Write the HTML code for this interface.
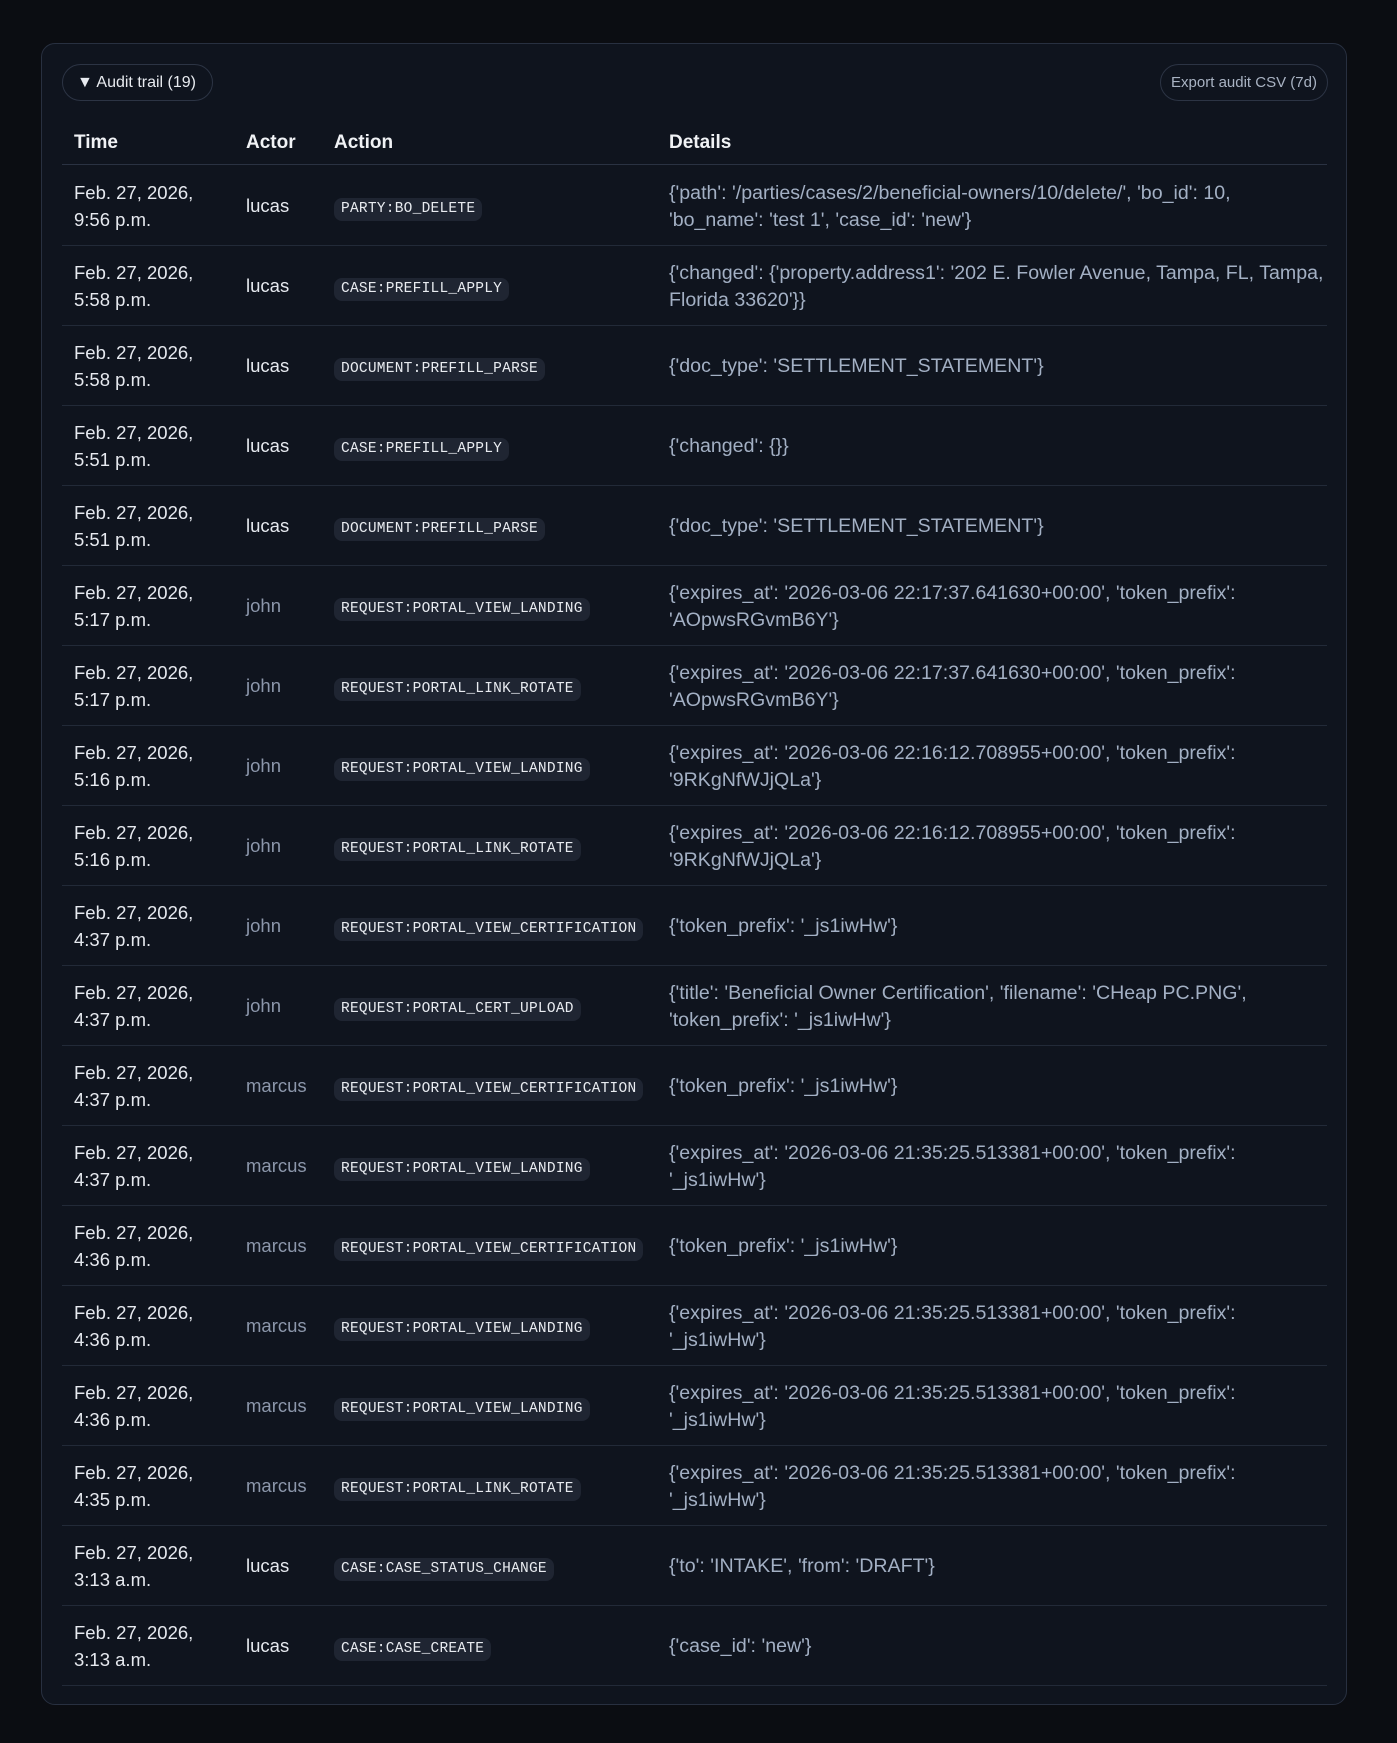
<!DOCTYPE html>
<html><head><meta charset="utf-8"><style>
*{box-sizing:border-box;margin:0;padding:0}
body{width:1397px;height:1743px;background:#0b0d12;font-family:"Liberation Sans",sans-serif;overflow:hidden;position:relative}
.card{position:absolute;left:41px;top:43px;width:1306px;height:1662px;background:#0f141e;border:1px solid #283040;border-radius:14px}
.sum{position:absolute;left:20px;top:20px;width:151px;height:37px;border:1px solid #2c3444;border-radius:19px;color:#e8ebf0;font-size:16px;line-height:35px;padding-left:14px}
.exp{position:absolute;left:1118px;top:20px;width:168px;height:37px;border:1px solid #2c3444;border-radius:19px;color:#a9b3c3;font-size:15px;line-height:35px;text-align:center}
.hdr{position:absolute;top:84px;left:20px;width:1265px;height:37px;border-bottom:1px solid #2a3242;color:#f0f2f5;font-weight:bold;font-size:19px}
.hdr span{position:absolute;top:4px}
.row{position:absolute;left:20px;width:1265px;height:80px;border-bottom:1px solid #222a38}
.t{position:absolute;left:12px;top:13px;color:#e6e9ef;font-size:18.5px;line-height:27px;white-space:nowrap}
.a{position:absolute;left:184px;top:0;line-height:80px;font-size:18.5px;color:#e6e9ef}
.a.g{color:#8c97ab}
.b{position:absolute;left:272px;top:32px;height:23px;line-height:23px;padding:0 7px;background:#1f2532;border-radius:8px;color:#e8ebf0;font-family:"Liberation Mono",monospace;font-size:14.5px;letter-spacing:.25px}
.d{position:absolute;left:607px;top:14px;color:#a3b0c4;font-size:19.6px;line-height:27px;white-space:nowrap}
.d.one{top:27px}
</style></head><body>
<div class="card">
<div class="sum">▼ Audit trail (19)</div>
<div class="exp">Export audit CSV (7d)</div>
<div class="hdr"><span style="left:12px">Time</span><span style="left:184px">Actor</span><span style="left:272px">Action</span><span style="left:607px">Details</span></div>
<div class="row" style="top:122px"><div class="t">Feb. 27, 2026,<br>9:56 p.m.</div><div class="a">lucas</div><div class="b">PARTY:BO_DELETE</div><div class="d">{'path': '/parties/cases/2/beneficial-owners/10/delete/', 'bo_id': 10,<br>'bo_name': 'test 1', 'case_id': 'new'}</div></div>
<div class="row" style="top:202px"><div class="t">Feb. 27, 2026,<br>5:58 p.m.</div><div class="a">lucas</div><div class="b">CASE:PREFILL_APPLY</div><div class="d">{'changed': {'property.address1': '202 E. Fowler Avenue, Tampa, FL, Tampa,<br>Florida 33620'}}</div></div>
<div class="row" style="top:282px"><div class="t">Feb. 27, 2026,<br>5:58 p.m.</div><div class="a">lucas</div><div class="b">DOCUMENT:PREFILL_PARSE</div><div class="d one">{'doc_type': 'SETTLEMENT_STATEMENT'}</div></div>
<div class="row" style="top:362px"><div class="t">Feb. 27, 2026,<br>5:51 p.m.</div><div class="a">lucas</div><div class="b">CASE:PREFILL_APPLY</div><div class="d one">{'changed': {}}</div></div>
<div class="row" style="top:442px"><div class="t">Feb. 27, 2026,<br>5:51 p.m.</div><div class="a">lucas</div><div class="b">DOCUMENT:PREFILL_PARSE</div><div class="d one">{'doc_type': 'SETTLEMENT_STATEMENT'}</div></div>
<div class="row" style="top:522px"><div class="t">Feb. 27, 2026,<br>5:17 p.m.</div><div class="a g">john</div><div class="b">REQUEST:PORTAL_VIEW_LANDING</div><div class="d">{'expires_at': '2026-03-06 22:17:37.641630+00:00', 'token_prefix':<br>'AOpwsRGvmB6Y'}</div></div>
<div class="row" style="top:602px"><div class="t">Feb. 27, 2026,<br>5:17 p.m.</div><div class="a g">john</div><div class="b">REQUEST:PORTAL_LINK_ROTATE</div><div class="d">{'expires_at': '2026-03-06 22:17:37.641630+00:00', 'token_prefix':<br>'AOpwsRGvmB6Y'}</div></div>
<div class="row" style="top:682px"><div class="t">Feb. 27, 2026,<br>5:16 p.m.</div><div class="a g">john</div><div class="b">REQUEST:PORTAL_VIEW_LANDING</div><div class="d">{'expires_at': '2026-03-06 22:16:12.708955+00:00', 'token_prefix':<br>'9RKgNfWJjQLa'}</div></div>
<div class="row" style="top:762px"><div class="t">Feb. 27, 2026,<br>5:16 p.m.</div><div class="a g">john</div><div class="b">REQUEST:PORTAL_LINK_ROTATE</div><div class="d">{'expires_at': '2026-03-06 22:16:12.708955+00:00', 'token_prefix':<br>'9RKgNfWJjQLa'}</div></div>
<div class="row" style="top:842px"><div class="t">Feb. 27, 2026,<br>4:37 p.m.</div><div class="a g">john</div><div class="b">REQUEST:PORTAL_VIEW_CERTIFICATION</div><div class="d one">{'token_prefix': '_js1iwHw'}</div></div>
<div class="row" style="top:922px"><div class="t">Feb. 27, 2026,<br>4:37 p.m.</div><div class="a g">john</div><div class="b">REQUEST:PORTAL_CERT_UPLOAD</div><div class="d">{'title': 'Beneficial Owner Certification', 'filename': 'CHeap PC.PNG',<br>'token_prefix': '_js1iwHw'}</div></div>
<div class="row" style="top:1002px"><div class="t">Feb. 27, 2026,<br>4:37 p.m.</div><div class="a g">marcus</div><div class="b">REQUEST:PORTAL_VIEW_CERTIFICATION</div><div class="d one">{'token_prefix': '_js1iwHw'}</div></div>
<div class="row" style="top:1082px"><div class="t">Feb. 27, 2026,<br>4:37 p.m.</div><div class="a g">marcus</div><div class="b">REQUEST:PORTAL_VIEW_LANDING</div><div class="d">{'expires_at': '2026-03-06 21:35:25.513381+00:00', 'token_prefix':<br>'_js1iwHw'}</div></div>
<div class="row" style="top:1162px"><div class="t">Feb. 27, 2026,<br>4:36 p.m.</div><div class="a g">marcus</div><div class="b">REQUEST:PORTAL_VIEW_CERTIFICATION</div><div class="d one">{'token_prefix': '_js1iwHw'}</div></div>
<div class="row" style="top:1242px"><div class="t">Feb. 27, 2026,<br>4:36 p.m.</div><div class="a g">marcus</div><div class="b">REQUEST:PORTAL_VIEW_LANDING</div><div class="d">{'expires_at': '2026-03-06 21:35:25.513381+00:00', 'token_prefix':<br>'_js1iwHw'}</div></div>
<div class="row" style="top:1322px"><div class="t">Feb. 27, 2026,<br>4:36 p.m.</div><div class="a g">marcus</div><div class="b">REQUEST:PORTAL_VIEW_LANDING</div><div class="d">{'expires_at': '2026-03-06 21:35:25.513381+00:00', 'token_prefix':<br>'_js1iwHw'}</div></div>
<div class="row" style="top:1402px"><div class="t">Feb. 27, 2026,<br>4:35 p.m.</div><div class="a g">marcus</div><div class="b">REQUEST:PORTAL_LINK_ROTATE</div><div class="d">{'expires_at': '2026-03-06 21:35:25.513381+00:00', 'token_prefix':<br>'_js1iwHw'}</div></div>
<div class="row" style="top:1482px"><div class="t">Feb. 27, 2026,<br>3:13 a.m.</div><div class="a">lucas</div><div class="b">CASE:CASE_STATUS_CHANGE</div><div class="d one">{'to': 'INTAKE', 'from': 'DRAFT'}</div></div>
<div class="row" style="top:1562px"><div class="t">Feb. 27, 2026,<br>3:13 a.m.</div><div class="a">lucas</div><div class="b">CASE:CASE_CREATE</div><div class="d one">{'case_id': 'new'}</div></div>
</div>
</body></html>
